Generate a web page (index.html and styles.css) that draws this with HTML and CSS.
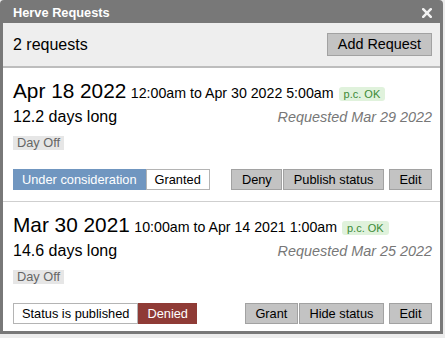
FILE: index.html
```html
<!DOCTYPE html>
<html lang="en">
<head>
  <meta charset="UTF-8">
  <meta name="viewport" content="width=device-width, initial-scale=1.0">
  <title>Herve Requests</title>
  <link rel="stylesheet" href="styles.css">
</head>
<body>
  <div class="dialog">
    <div class="titlebar">
      <span class="title">Herve Requests</span>
      <svg class="close" width="10" height="10" viewBox="0 0 10 10" xmlns="http://www.w3.org/2000/svg">
        <line x1="1.2" y1="1.2" x2="8.8" y2="8.8" stroke="#f2f2f2" stroke-width="2.5" stroke-linecap="round"></line>
        <line x1="8.8" y1="1.2" x2="1.2" y2="8.8" stroke="#f2f2f2" stroke-width="2.5" stroke-linecap="round"></line>
      </svg>
    </div>

    <div class="header">
      <span class="count">2 requests</span>
      <button class="btn btn-big">Add Request</button>
    </div>

    <div class="list">
      <!-- first request -->
      <div class="entry">
        <div class="line-dates">
          <span class="date">Apr 18 2022</span>
          <span class="time">12:00am to Apr 30 2022 5:00am</span>
          <span class="badge">p.c. OK</span>
        </div>
        <div class="line-info">
          <span class="length">12.2 days long</span>
          <span class="requested">Requested Mar 29 2022</span>
        </div>
        <span class="tag">Day Off</span>
        <div class="actions">
          <div class="segments">
            <span class="seg seg-blue">Under consideration</span>
            <span class="seg seg-plain">Granted</span>
          </div>
          <div class="buttons">
            <button class="btn">Deny</button>
            <button class="btn">Publish status</button>
            <button class="btn btn-edit">Edit</button>
          </div>
        </div>
      </div>

      <!-- second request -->
      <div class="entry">
        <div class="line-dates">
          <span class="date">Mar 30 2021</span>
          <span class="time">10:00am to Apr 14 2021 1:00am</span>
          <span class="badge">p.c. OK</span>
        </div>
        <div class="line-info">
          <span class="length">14.6 days long</span>
          <span class="requested">Requested Mar 25 2022</span>
        </div>
        <span class="tag">Day Off</span>
        <div class="actions">
          <div class="segments">
            <span class="seg seg-plain">Status is published</span>
            <span class="seg seg-red">Denied</span>
          </div>
          <div class="buttons">
            <button class="btn">Grant</button>
            <button class="btn">Hide status</button>
            <button class="btn btn-edit">Edit</button>
          </div>
        </div>
      </div>
    </div>
  </div>
</body>
</html>
```

FILE: styles.css
```css
body {
  margin: 0;
  background: #ececec;
  font-family: "Liberation Sans", Arial, sans-serif;
  color: #000;
}

.dialog {
  width: 443px;
  height: 334px;
  box-sizing: border-box;
  background: #787878;
  border-radius: 4px 4px 0 0;
  padding: 0 3px 3px;
  display: flex;
  flex-direction: column;
}

.titlebar {
  height: 23px;
  box-sizing: border-box;
  padding: 2px 8px 0 10px;
  display: flex;
  align-items: center;
  justify-content: space-between;
}

.title {
  color: #fff;
  font-weight: bold;
  font-size: 12.8px;
  line-height: 15px;
}

.close {
  display: block;
}

.header {
  height: 45px;
  box-sizing: border-box;
  background: #eeeeee;
  border-bottom: 2px solid #bdbdbd;
  padding: 0 8px 0 10px;
  display: flex;
  align-items: center;
  justify-content: space-between;
}

.count {
  font-size: 16px;
  line-height: 20px;
}

.btn {
  font-family: inherit;
  font-size: 12.8px;
  line-height: 19px;
  height: 21px;
  padding: 0 9.5px;
  margin: 0;
  background: #c3c3c3;
  border: 1px solid #a2a2a2;
  color: #000;
  border-radius: 0;
}

.btn-big {
  font-size: 14.4px;
  height: 23px;
  line-height: 21px;
  padding: 0 10px;
}

.list {
  flex: 1;
  background: #fff;
  overflow: hidden;
}

.entry {
  padding: 11px 8px 11px 10px;
  border-bottom: 1px solid #cfcfcf;
}

.line-dates {
  display: flex;
  align-items: baseline;
  line-height: 24px;
}

.date {
  font-size: 20.8px;
}

.time {
  font-size: 14.2px;
  line-height: 16px;
  margin-left: 4.5px;
}

.badge {
  font-size: 11px;
  line-height: 14px;
  padding: 0 5px;
  margin-left: 5px;
  color: #3b8a36;
  background: #e0f2dc;
  border-radius: 3px;
}

.line-info {
  display: flex;
  align-items: baseline;
  justify-content: space-between;
  margin-top: 4px;
  line-height: 20px;
}

.length {
  font-size: 16px;
}

.requested {
  font-size: 14.4px;
  line-height: 18px;
  font-style: italic;
  color: #777;
}

.tag {
  display: block;
  width: fit-content;
  margin-top: 9px;
  font-size: 12.8px;
  line-height: 14px;
  padding: 0 4px;
  background: #e6e6e6;
  color: #666;
}

.actions {
  display: flex;
  margin-top: 19px;
  height: 21px;
}

.segments {
  display: flex;
}

.seg {
  font-size: 12.8px;
  line-height: 19px;
  padding: 0 8px;
  border: 1px solid #b4b4b4;
}

.seg-blue {
  background: #7096c0;
  border-color: #7096c0;
  color: #fff;
}

.seg-red {
  background: #8f3b36;
  border-color: #8f3b36;
  color: #fff;
}

.seg-plain {
  background: #fff;
}

.buttons {
  margin-left: auto;
  display: flex;
  gap: 1px;
}

.btn-edit {
  margin-left: 4px;
}
```
